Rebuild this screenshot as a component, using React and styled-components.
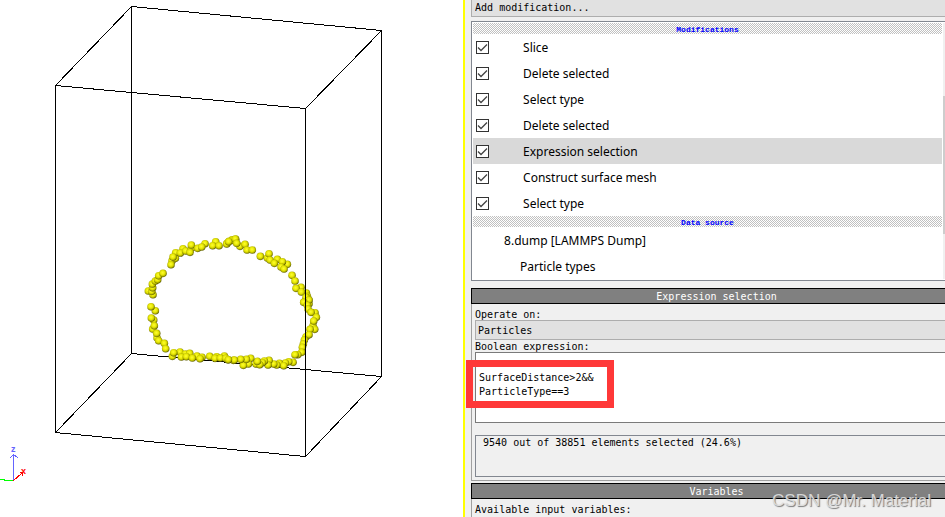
import React, { useState } from 'react';
import styled, { createGlobalStyle } from 'styled-components';

const GlobalStyle = createGlobalStyle`
  * {
    box-sizing: border-box;
  }

  body {
    margin: 0;
    background: #f0f0f0;
    color: #000;
    font-family: 'DejaVu Sans Mono', 'Liberation Mono', monospace;
    font-size: 10px;
  }
`;

const Window = styled.div`
  position: relative;
  display: grid;
  grid-template-columns: 49fr 51fr;
  height: 100vh;
  overflow: hidden;
`;

const Viewport = styled.main`
  background: #fff;
  min-width: 0;
  overflow: hidden;

  svg {
    display: block;
  }
`;

const SidePanel = styled.aside`
  min-width: 0;
  border-left: 2px solid #ff0;
  padding-left: 6px;
`;

const Combo = styled.select`
  display: block;
  appearance: none;
  width: 100%;
  height: ${props => (props.$docked ? '17px' : '20px')};
  padding: ${props => (props.$docked ? '0 3px 2px' : '0 2px')};
  border: 1px solid #adadad;
  border-width: ${props => (props.$docked ? '0 0 1px 1px' : '1px 0 1px 1px')};
  border-radius: 0;
  background: #e1e1e1;
  color: #000;
  font: inherit;
  outline: none;
`;

const Pipeline = styled.div`
  display: grid;
  grid-template-columns: 1fr 2px;
  column-gap: 1px;
  margin-top: 4px;
  padding: 1px 0 1px 1px;
  border: 1px solid #828790;
  border-right: none;
  background: #fff;
`;

const ScrollTrack = styled.div`
  background: #f0f0f0;
  padding-top: 73px;
`;

const ScrollThumb = styled.div`
  height: 138px;
  background: #cdcdcd;
`;

const GroupTitle = styled.div`
  height: 11px;
  line-height: 13px;
  background: repeating-conic-gradient(#c0c0c0 0 25%, #fff 0 50%) 0 0 / 2px 2px;
  color: #00f;
  font-family: 'Liberation Mono', monospace;
  font-size: 8px;
  font-weight: bold;
  text-align: center;
`;

const Row = styled.div`
  display: flex;
  align-items: center;
  height: 26px;
  padding-left: ${props => props.$indent || 3}px;
  background: ${props => (props.$active ? '#d9d9d9' : 'transparent')};
  font-family: 'Noto Sans', 'Open Sans', sans-serif;
  font-size: 12px;
`;

const RowLabel = styled.label`
  display: flex;
  align-items: center;
  gap: 34px;
`;

const CheckCell = styled.span`
  display: grid;

  > * {
    grid-area: 1 / 1;
  }

  svg {
    pointer-events: none;
    visibility: hidden;
  }

  input:checked + svg {
    visibility: visible;
  }
`;

const CheckBox = styled.input`
  appearance: none;
  width: 13px;
  height: 13px;
  margin: 0;
  border: 1px solid #333;
  background: #fff;
`;

const SectionTitle = styled.h2`
  height: 16px;
  margin: ${props => props.$top}px 0 0;
  padding-left: 16px;
  border: 1px solid #000;
  border-right: none;
  background: #808080;
  color: #fff;
  font-size: 10px;
  font-weight: normal;
  line-height: 15px;
  text-align: center;
`;

const SectionBody = styled.section`
  padding: 4px 0 3px 3px;
  border-left: 1px solid #a0a0a0;
  border-bottom: 1px solid #a0a0a0;
`;

const FieldLabel = styled.label`
  display: block;
  height: 12px;
  line-height: 13px;
`;

const ExpressionField = styled.div`
  position: relative;
`;

const Expression = styled.textarea`
  display: block;
  width: 100%;
  height: 71px;
  padding: 4px 3px;
  border: 1px solid #7a7a7a;
  border-right: none;
  border-radius: 0;
  background: #fff;
  color: #000;
  font: inherit;
  line-height: 14px;
  resize: none;
  outline: none;
`;

const Highlight = styled.div`
  position: absolute;
  top: 8px;
  left: -9px;
  width: 148px;
  height: 48px;
  border: 7px solid #ff3838;
  pointer-events: none;
`;

const Status = styled.output`
  display: block;
  height: 42px;
  margin-top: 12px;
  padding-left: 7px;
  border: 1px solid #828790;
  border-right: none;
  line-height: 13px;
`;

const Watermark = styled.div`
  position: absolute;
  right: 14px;
  bottom: 6px;
  color: rgba(225, 225, 225, 0.9);
  font-family: 'Liberation Sans', sans-serif;
  font-size: 17px;
  line-height: 20px;
  text-shadow: 1px 1px 1px #777;
`;

const modifiers = [
  'Slice',
  'Delete selected',
  'Select type',
  'Delete selected',
  'Expression selection',
  'Construct surface mesh',
  'Select type'
];

// particle centres in thirds of a pixel, relative to each cluster origin
const clusters = [
  {
    x: 140,
    y: 225,
    points: [
      [25, 198], [39, 209], [35, 199], [38, 188], [37, 177], [46, 168], [53, 164], [56, 152], [69, 145],
      [96, 107], [93, 119], [106, 100], [107, 83], [99, 96], [129, 71], [121, 84], [137, 78], [154, 70],
      [150, 82], [154, 60], [173, 70], [195, 56], [185, 66], [227, 50], [218, 62], [237, 62], [261, 55],
      [276, 44], [267, 49], [287, 43]
    ]
  },
  {
    x: 225,
    y: 225,
    points: [
      [5, 57], [22, 46], [11, 50], [31, 42], [45, 64], [35, 55], [60, 58], [66, 75], [82, 75], [106, 94],
      [127, 99], [132, 86], [135, 105], [157, 103], [148, 115], [187, 118], [172, 110], [168, 126],
      [177, 132], [201, 151], [210, 168], [228, 187], [213, 190], [244, 204], [229, 201], [247, 214],
      [251, 224], [252, 236], [237, 231]
    ]
  },
  {
    x: 140,
    y: 290,
    points: [
      [46, 62], [33, 50], [41, 90], [34, 84], [38, 117], [43, 107], [51, 143], [50, 130], [56, 152],
      [73, 160], [77, 176], [97, 199], [120, 186], [101, 188], [136, 192], [124, 201], [149, 190],
      [139, 200], [171, 198], [157, 204], [186, 202], [180, 206], [209, 199], [230, 200], [225, 205],
      [253, 198], [241, 204], [280, 211], [264, 209]
    ]
  },
  {
    x: 225,
    y: 290,
    points: [
      [243, 22], [252, 30], [236, 37], [247, 46], [249, 57], [270, 68], [258, 67], [274, 82], [264, 107],
      [266, 93], [269, 118], [255, 118], [243, 140], [252, 134], [238, 150], [235, 162], [232, 172],
      [230, 187], [218, 194], [210, 194], [204, 217], [191, 215], [181, 219], [163, 220], [176, 227],
      [155, 225], [146, 222], [132, 211], [129, 225], [118, 213], [112, 218], [93, 222], [104, 224],
      [97, 214], [77, 205], [60, 217], [70, 222], [55, 226], [64, 208], [47, 208], [28, 210], [2, 205],
      [10, 209]
    ]
  }
];

const Scene = () => (
  <svg width="100%" height="100%" viewBox="0 0 463 517" preserveAspectRatio="xMinYMin meet">
    <defs>
      <radialGradient id="particle" cx="0.45" cy="0.42" r="0.58">
        <stop offset="0" stopColor="#ffff30" />
        <stop offset="0.5" stopColor="#e8e806" />
        <stop offset="0.75" stopColor="#b8b800" />
        <stop offset="1" stopColor="#5a5a00" />
      </radialGradient>
    </defs>

    <g fill="none" stroke="#000" shapeRendering="crispEdges">
      <path d="M131.5 6.5L55.5 85.5V432.5L131.5 353.5ZM131.5 6.5L381.5 30.5V376.5L131.5 353.5" />
    </g>

    {clusters.map(cluster => (
      <g key={`${cluster.x}-${cluster.y}`} transform={`translate(${cluster.x} ${cluster.y})`}>
        {cluster.points.map(([x, y]) => (
          <circle key={`${x}-${y}`} cx={x / 3} cy={y / 3} r="3.8" fill="url(#particle)" />
        ))}
      </g>
    ))}

    <g fill="none" stroke="#000" shapeRendering="crispEdges">
      <path d="M55.5 85.5L305.5 108.5V456.5L55.5 432.5M305.5 108.5L381.5 30.5M305.5 456.5L381.5 376.5" />
    </g>

    <g fill="none" shapeRendering="crispEdges">
      <path d="M0 479.5H4L5 480.5H13" stroke="#0f0" />
      <path d="M13.5 480.5L22.5 472.5M19.5 472.5H22.5V475.5" stroke="#f00" />
      <path d="M13.5 480V454M10.5 457.5L13.5 454.5L17.5 457.5" stroke="#6464ff" />
    </g>
    <g fontFamily="Liberation Sans, sans-serif" fontSize="9" fontWeight="bold">
      <text x="11" y="452" fill="#6464ff">z</text>
      <text x="21" y="474" fill="#f00">x</text>
    </g>
  </svg>
);

const ModifierRow = ({ name, active }) => {
  const [enabled, setEnabled] = useState(true);

  return (
    <Row $active={active}>
      <RowLabel>
        <CheckCell>
          <CheckBox type="checkbox" checked={enabled} onChange={e => setEnabled(e.target.checked)} />
          <svg width="13" height="13" viewBox="0 0 13 13" fill="none" stroke="#444" strokeWidth="1.3">
            <path d="M2 6.5L5 9.5L11 3.5" />
          </svg>
        </CheckCell>
        {name}
      </RowLabel>
    </Row>
  );
};

const App = () => {
  const [expression, setExpression] = useState('\nSurfaceDistance>2&&\nParticleType==3');

  return (
    <Window>
      <GlobalStyle />
      <Viewport>
        <Scene />
      </Viewport>

      <SidePanel>
        <Combo $docked aria-label="Add modification">
          <option>Add modification...</option>
        </Combo>

        <Pipeline>
          <div>
            <GroupTitle>Modifications</GroupTitle>
            {modifiers.map((name, index) => (
              <ModifierRow key={index} name={name} active={name === 'Expression selection'} />
            ))}
            <GroupTitle>Data source</GroupTitle>
            <Row $indent={31}>8.dump [LAMMPS Dump]</Row>
            <Row $indent={47}>Particle types</Row>
          </div>
          <ScrollTrack>
            <ScrollThumb />
          </ScrollTrack>
        </Pipeline>

        <SectionTitle $top={7}>Expression selection</SectionTitle>
        <SectionBody>
          <FieldLabel htmlFor="operate-on">Operate on:</FieldLabel>
          <Combo id="operate-on">
            <option>Particles</option>
          </Combo>
          <FieldLabel htmlFor="expression">Boolean expression:</FieldLabel>
          <ExpressionField>
            <Expression
              id="expression"
              spellCheck={false}
              value={expression}
              onChange={e => setExpression(e.target.value)}
            />
            <Highlight />
          </ExpressionField>
          <Status>9540 out of 38851 elements selected (24.6%)</Status>
        </SectionBody>

        <SectionTitle $top={2}>Variables</SectionTitle>
        <SectionBody>
          <FieldLabel as="div">Available input variables:</FieldLabel>
        </SectionBody>
      </SidePanel>

      <Watermark>CSDN @Mr. Material</Watermark>
    </Window>
  );
};

export default App;
